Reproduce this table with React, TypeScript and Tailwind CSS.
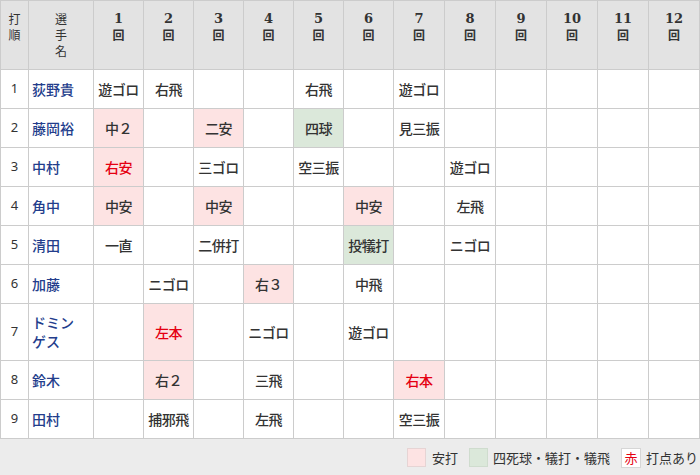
import React from "react";

type Cell = { t: string; bg?: "p" | "g"; red?: boolean };
type Row = { n: number; name: React.ReactNode; cells: Record<number, Cell>; tall?: boolean };

const rows: Row[] = [
  { n: 1, name: "荻野貴", cells: { 1: { t: "遊ゴロ" }, 2: { t: "右飛" }, 5: { t: "右飛" }, 7: { t: "遊ゴロ" } } },
  { n: 2, name: "藤岡裕", cells: { 1: { t: "中２", bg: "p" }, 3: { t: "二安", bg: "p" }, 5: { t: "四球", bg: "g" }, 7: { t: "見三振" } } },
  { n: 3, name: "中村", cells: { 1: { t: "右安", bg: "p", red: true }, 3: { t: "三ゴロ" }, 5: { t: "空三振" }, 8: { t: "遊ゴロ" } } },
  { n: 4, name: "角中", cells: { 1: { t: "中安", bg: "p" }, 3: { t: "中安", bg: "p" }, 6: { t: "中安", bg: "p" }, 8: { t: "左飛" } } },
  { n: 5, name: "清田", cells: { 1: { t: "一直" }, 3: { t: "二併打" }, 6: { t: "投犠打", bg: "g" }, 8: { t: "ニゴロ" } } },
  { n: 6, name: "加藤", cells: { 2: { t: "ニゴロ" }, 4: { t: "右３", bg: "p" }, 6: { t: "中飛" } } },
  { n: 7, name: (<>ドミン<br />ゲス</>), tall: true, cells: { 2: { t: "左本", bg: "p", red: true }, 4: { t: "ニゴロ" }, 6: { t: "遊ゴロ" } } },
  { n: 8, name: "鈴木", cells: { 2: { t: "右２", bg: "p" }, 4: { t: "三飛" }, 7: { t: "右本", bg: "p", red: true } } },
  { n: 9, name: "田村", cells: { 2: { t: "捕邪飛" }, 4: { t: "左飛" }, 7: { t: "空三振" } } },
];

const innings = [1, 2, 3, 4, 5, 6, 7, 8, 9, 10, 11, 12];
const colW = ["w-[50px]", "w-[50px]", "w-[50px]", "w-[50px]", "w-[50px]", "w-[50px]", "w-[51px]", "w-[51px]", "w-[51px]", "w-[51px]", "w-[51px]", "w-[51px]"];
const jp = { fontFamily: '"Noto Sans CJK JP", "Noto Sans", sans-serif' };

export default function App() {
  return (
    <div className="w-[700px] h-[475px] bg-[#ececec] overflow-hidden" style={jp}>
      <table className="w-[700px] table-fixed border-collapse bg-white text-[#333]">
        <colgroup>
          <col className="w-[28px]" />
          <col className="w-[65px]" />
          {innings.map((i) => (
            <col key={i} className={colW[i - 1]} />
          ))}
        </colgroup>
        <thead>
          <tr className="h-[69px] bg-[#e3e3e3]">
            <th className="border border-[#cccccc] align-top pt-[10px] text-[12px] font-normal text-[#333]">
              <div className="leading-[16px]">打</div>
              <div className="leading-[16px]">順</div>
            </th>
            <th className="border border-[#cccccc] align-top pt-[10px] text-[12px] font-normal text-[#333]">
              <div className="leading-[16px]">選</div>
              <div className="leading-[16px]">手</div>
              <div className="leading-[16px]">名</div>
            </th>
            {innings.map((i) => (
              <th key={i} className="border border-[#cccccc] align-top pt-[10px] font-normal text-[#333]">
                <div className="leading-[16px] text-[13px] font-bold" style={{ fontFamily: '"DejaVu Serif", serif' }}>{i}</div>
                <div className="leading-[16px] text-[12px] font-bold">回</div>
              </th>
            ))}
          </tr>
        </thead>
        <tbody>
          {rows.map((r) => (
            <tr key={r.n} className={r.tall ? "h-[57px]" : "h-[39px]"}>
              <td className="border border-[#cccccc] text-center text-[13px]" style={{ fontFamily: '"Noto Sans", sans-serif' }}>{r.n}</td>
              <td className="border border-[#cccccc] pl-[3px] text-[14px] leading-[19px] text-[#233d8c] font-medium">{r.name}</td>
              {innings.map((i) => {
                const c = r.cells[i];
                const bg = c?.bg === "p" ? "bg-[#fde3e3]" : c?.bg === "g" ? "bg-[#dbe8da]" : "";
                return (
                  <td
                    key={i}
                    className={`border border-[#cccccc] text-center text-[14px] font-medium tracking-[-0.5px] ${bg} ${c?.red ? "text-[#e50012]" : "text-[#333]"}`}
                  >
                    {c?.t ?? ""}
                  </td>
                );
              })}
            </tr>
          ))}
        </tbody>
      </table>
      <div className="flex items-center justify-end h-[37px] pr-[2px] text-[13px] text-[#333]">
        <span className="w-[19px] h-[19px] bg-[#fde3e3] border border-[#e6d4d4]" />
        <span className="ml-[6px] mr-[11px]">安打</span>
        <span className="w-[19px] h-[19px] bg-[#dbe8da] border border-[#cfdcce]" />
        <span className="ml-[5px] mr-[11px]">四死球・犠打・犠飛</span>
        <span className="w-[20px] h-[20px] bg-white border border-[#d6d6d6] flex items-center justify-center text-[13px] text-[#e50012]">赤</span>
        <span className="ml-[5px]">打点あり</span>
      </div>
    </div>
  );
}
